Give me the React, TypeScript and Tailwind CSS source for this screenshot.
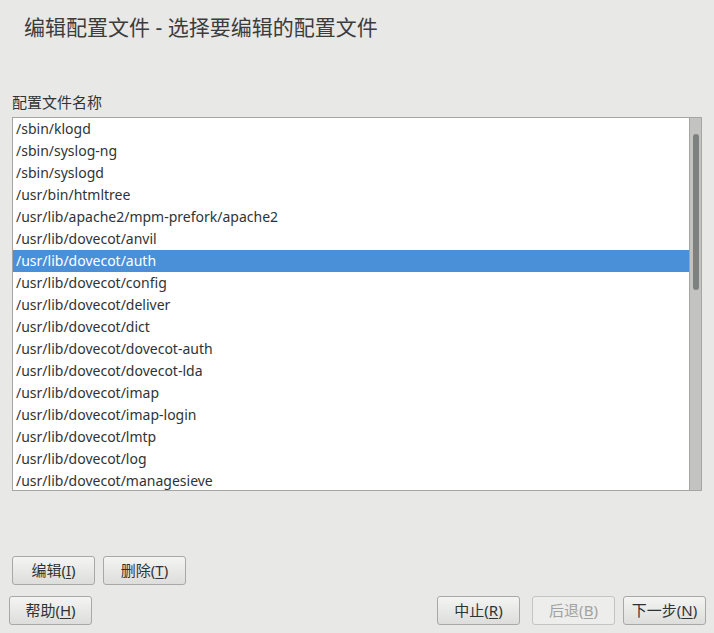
const files = [
    "/sbin/klogd",
    "/sbin/syslog-ng",
    "/sbin/syslogd",
    "/usr/bin/htmltree",
    "/usr/lib/apache2/mpm-prefork/apache2",
    "/usr/lib/dovecot/anvil",
    "/usr/lib/dovecot/auth",
    "/usr/lib/dovecot/config",
    "/usr/lib/dovecot/deliver",
    "/usr/lib/dovecot/dict",
    "/usr/lib/dovecot/dovecot-auth",
    "/usr/lib/dovecot/dovecot-lda",
    "/usr/lib/dovecot/imap",
    "/usr/lib/dovecot/imap-login",
    "/usr/lib/dovecot/lmtp",
    "/usr/lib/dovecot/log",
    "/usr/lib/dovecot/managesieve",
];

const selected = 6;

const Btn = ({ label, mn, disabled }: { label: string; mn: string; disabled?: boolean }) => (
    <button
        disabled={disabled}
        className={`w-[83px] h-[29px] rounded-[3px] border text-[15px] leading-none ${disabled
            ? "border-[#c4c4c4] bg-[#ededec] text-[#a1a2a0]"
            : "border-[#a8a8a6] bg-gradient-to-b from-[#f4f4f3] to-[#dddddb] text-[#2e3436]"
            }`}
    >
        {label}(<span className="underline underline-offset-2">{mn}</span>)
    </button>
);

export default function App() {
    return (
        <div
            className="w-[714px] h-[633px] bg-[#e8e8e7] flex flex-col text-[#2e3436] overflow-hidden"
            style={{ fontFamily: '"Noto Sans", "Noto Sans CJK SC", sans-serif' }}
        >
            <h1 className="pl-[24px] pt-[13px] text-[21px] leading-[28px] text-[#3c3c3c] font-normal">
                编辑配置文件 - 选择要编辑的配置文件
            </h1>

            <div className="pl-[12px] mt-[51px] text-[15px] leading-[20px]">配置文件名称</div>

            <div className="mx-[12px] mt-[5px] w-[690px] h-[374px] border border-[#a5a5a4] bg-white flex">
                <div className="flex-1 overflow-hidden">
                    {files.map((f, i) => (
                        <div
                            key={f}
                            className={`h-[22px] pl-[3px] text-[14px] leading-[22px] whitespace-nowrap ${i === selected ? "bg-[#4a90d9] text-white" : ""
                                }`}
                        >
                            {f}
                        </div>
                    ))}
                </div>
                <div className="w-[12px] border-l border-[#a5a5a4] bg-[#c3c3c2] pt-[16px] flex justify-center">
                    <div className="w-[6px] h-[156px] rounded-full bg-[#7e8180]" />
                </div>
            </div>

            <div className="flex-1" />

            <div className="flex gap-[8px] pl-[12px]">
                <Btn label="编辑" mn="I" />
                <Btn label="删除" mn="T" />
            </div>

            <div className="flex items-center mt-[11px] mb-[8px] pl-[9px] pr-[8px]">
                <Btn label="帮助" mn="H" />
                <div className="flex-1" />
                <div className="flex gap-[12px]">
                    <Btn label="中止" mn="R" />
                    <Btn label="后退" mn="B" disabled />
                </div>
                <div className="ml-[8px]">
                    <Btn label="下一步" mn="N" />
                </div>
            </div>
        </div>
    );
}
